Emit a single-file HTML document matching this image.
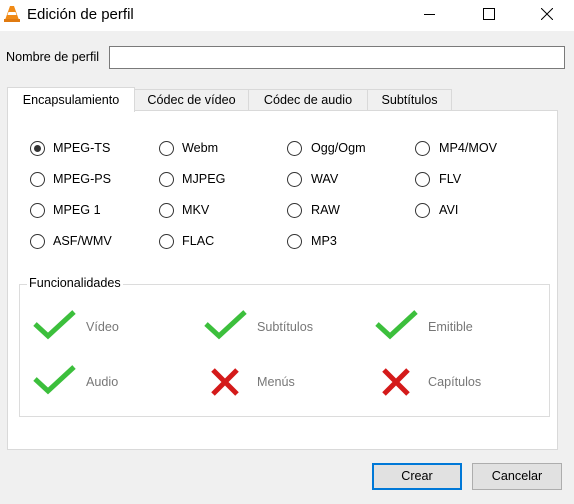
<!DOCTYPE html><html><head><style>
body{margin:0;width:574px;height:504px;background:#f0f0f0;font-family:"Liberation Sans",sans-serif;font-size:12.6px;position:relative;overflow:hidden;color:#000}
.a{position:absolute}
.r{position:absolute;width:13px;height:13px;border:1px solid #333;border-radius:50%;background:#fff}
.r.on::after{content:"";position:absolute;left:3px;top:3px;width:7px;height:7px;border-radius:50%;background:#333}
.l{position:absolute;font-size:12.6px}
.f{position:absolute;color:#777;font-size:12.6px}
.tab{position:absolute;top:89px;height:20px;border:1px solid #d9d9d9;border-bottom:none;background:#f0f0f0;text-align:center;line-height:20px}
.btn{position:absolute;top:463px;width:88px;height:25px;border:1px solid #adadad;background:#e1e1e1;text-align:center;line-height:25px}
</style></head><body>
<div class="a" style="left:0;top:0;width:574px;height:31px;background:#fff"></div>
<svg class="a" style="left:4px;top:5px" width="16" height="18"><path d="M6 1h4l5 14H1z" fill="#f08a16"/><path d="M4.5 7h7l1 3h-9z" fill="#fff"/><rect x="0" y="14" width="16" height="3" fill="#e07a10"/></svg>
<div class="a" style="left:27px;top:6px;font-size:15px">Edición de perfil</div>
<div class="a" style="left:424px;top:14px;width:11px;height:1px;background:#000"></div>
<div class="a" style="left:483px;top:8px;width:10px;height:10px;border:1px solid #000"></div>
<svg class="a" style="left:541px;top:8px" width="12" height="12"><path d="M0 0L12 12M12 0L0 12" stroke="#000"/></svg>
<div class="a" style="left:6px;top:50px">Nombre de perfil</div>
<div class="a" style="left:109px;top:46px;width:454px;height:21px;border:1px solid #7a7a7a;background:#fff"></div>
<div class="a" style="left:7px;top:110px;width:549px;height:338px;border:1px solid #d9d9d9;background:#fff"></div>
<div class="tab" style="left:7px;top:87px;height:24px;width:126px;background:#fff;line-height:24px">Encapsulamiento</div>
<div class="tab" style="left:134px;width:113px">Códec de vídeo</div>
<div class="tab" style="left:248px;width:118px">Códec de audio</div>
<div class="tab" style="left:367px;width:83px">Subtítulos</div>
<div class="r on" style="left:30px;top:141px"></div><div class="l" style="left:53px;top:141px">MPEG-TS</div>
<div class="r" style="left:159px;top:141px"></div><div class="l" style="left:182px;top:141px">Webm</div>
<div class="r" style="left:287px;top:141px"></div><div class="l" style="left:311px;top:141px">Ogg/Ogm</div>
<div class="r" style="left:415px;top:141px"></div><div class="l" style="left:439px;top:141px">MP4/MOV</div>
<div class="r" style="left:30px;top:172px"></div><div class="l" style="left:53px;top:172px">MPEG-PS</div>
<div class="r" style="left:159px;top:172px"></div><div class="l" style="left:182px;top:172px">MJPEG</div>
<div class="r" style="left:287px;top:172px"></div><div class="l" style="left:311px;top:172px">WAV</div>
<div class="r" style="left:415px;top:172px"></div><div class="l" style="left:439px;top:172px">FLV</div>
<div class="r" style="left:30px;top:203px"></div><div class="l" style="left:53px;top:203px">MPEG 1</div>
<div class="r" style="left:159px;top:203px"></div><div class="l" style="left:182px;top:203px">MKV</div>
<div class="r" style="left:287px;top:203px"></div><div class="l" style="left:311px;top:203px">RAW</div>
<div class="r" style="left:415px;top:203px"></div><div class="l" style="left:439px;top:203px">AVI</div>
<div class="r" style="left:30px;top:234px"></div><div class="l" style="left:53px;top:234px">ASF/WMV</div>
<div class="r" style="left:159px;top:234px"></div><div class="l" style="left:182px;top:234px">FLAC</div>
<div class="r" style="left:287px;top:234px"></div><div class="l" style="left:311px;top:234px">MP3</div>
<div class="a" style="left:19px;top:284px;width:529px;height:131px;border:1px solid #dcdcdc"></div>
<div class="a" style="left:27px;top:276px;background:#fff;padding:0 2px">Funcionalidades</div>
<svg class="a" style="left:0;top:300px" width="574" height="110">
<g fill="none" stroke="#3cbf3c" stroke-width="5">
<path d="M35 24l13 12 26-24"/><path d="M206 24l13 12 26-24"/><path d="M377 24l13 12 26-24"/><path d="M35 79l13 12 26-24"/>
</g>
<g stroke="#d41a1a" stroke-width="5"><path d="M213 70l24 24M237 70l-24 24"/><path d="M384 70l24 24M408 70l-24 24"/></g>
</svg>
<div class="f" style="left:86px;top:320px">Vídeo</div>
<div class="f" style="left:257px;top:320px">Subtítulos</div>
<div class="f" style="left:428px;top:320px">Emitible</div>
<div class="f" style="left:86px;top:375px">Audio</div>
<div class="f" style="left:257px;top:375px">Menús</div>
<div class="f" style="left:428px;top:375px">Capítulos</div>
<div class="btn" style="left:372px;border:1px solid #0078d7;box-shadow:inset 0 0 0 1px #0078d7">Crear</div>
<div class="btn" style="left:472px">Cancelar</div>
</body></html>
